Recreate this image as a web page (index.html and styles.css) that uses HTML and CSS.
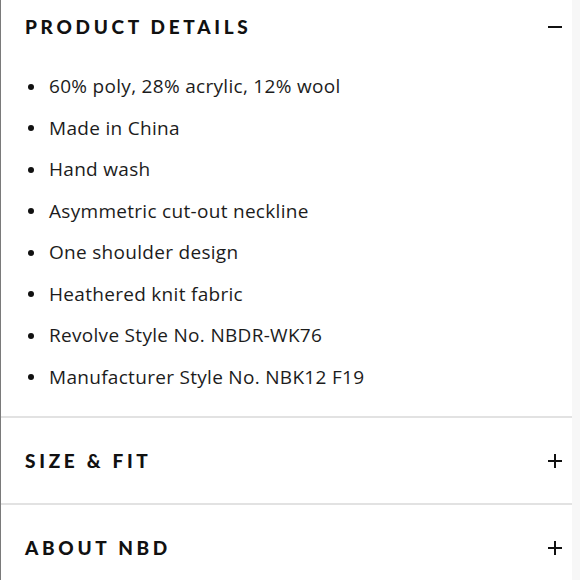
FILE: index.html
```html
<!DOCTYPE html>
<html>
<head>
<meta charset="utf-8">
<link rel="stylesheet" href="styles.css">
</head>
<body>
<div class="panel">
  <section class="acc open">
    <div class="acc-head first">
      <h2>PRODUCT DETAILS</h2>
      <span class="icon minus"></span>
    </div>
    <ul class="details">
      <li>60% poly, 28% acrylic, 12% wool</li>
      <li>Made in China</li>
      <li>Hand wash</li>
      <li>Asymmetric cut-out neckline</li>
      <li>One shoulder design</li>
      <li>Heathered knit fabric</li>
      <li>Revolve Style No. NBDR-WK76</li>
      <li>Manufacturer Style No. NBK12 F19</li>
    </ul>
  </section>
  <section class="acc">
    <div class="acc-head">
      <h2>SIZE &amp; FIT</h2>
      <span class="icon plus"></span>
    </div>
  </section>
  <section class="acc last">
    <div class="acc-head">
      <h2>ABOUT NBD</h2>
      <span class="icon plus"></span>
    </div>
  </section>
</div>
</body>
</html>
```

FILE: styles.css
```css
html, body {
  margin: 0;
  padding: 0;
  background: #f7f7f7;
  height: 100%;
}
body {
  font-family: "Open Sans", "Liberation Sans", sans-serif;
  color: #111;
  overflow: hidden;
}
.panel {
  width: 571px;
  min-height: 100%;
  background: #fff;
  border-left: 1px solid #7a7a7a;
}
.acc {
  border-bottom: 2px solid #e2e2e2;
}
.acc.last {
  border-bottom: none;
}
.acc-head {
  height: 85px;
  display: flex;
  align-items: center;
  justify-content: space-between;
  padding: 0 10px 0 24px;
}
.acc-head.first {
  height: 53px;
}
.acc-head h2 {
  margin: 0;
  font-family: Lato, "Liberation Sans", sans-serif;
  font-size: 19px;
  font-weight: 900;
  letter-spacing: 3.7px;
  color: #111;
}
.icon {
  position: relative;
  width: 14px;
  height: 14px;
}
.icon::before,
.icon::after {
  content: "";
  position: absolute;
  background: #111;
}
.icon::before {
  left: 0;
  top: 6px;
  width: 14px;
  height: 2px;
}
.plus::after {
  left: 6px;
  top: 0;
  width: 2px;
  height: 14px;
}
.details {
  list-style: none;
  margin: 13px 0 0;
  padding: 0 0 18px 27px;
  font-size: 19px;
  letter-spacing: 0.3px;
  line-height: 41.5px;
  color: #1c1c1c;
}
.details li {
  display: flex;
  align-items: center;
  gap: 15px;
}
.details li::before {
  content: "";
  width: 6px;
  height: 6px;
  border-radius: 50%;
  background: #111;
  flex: none;
}
```
